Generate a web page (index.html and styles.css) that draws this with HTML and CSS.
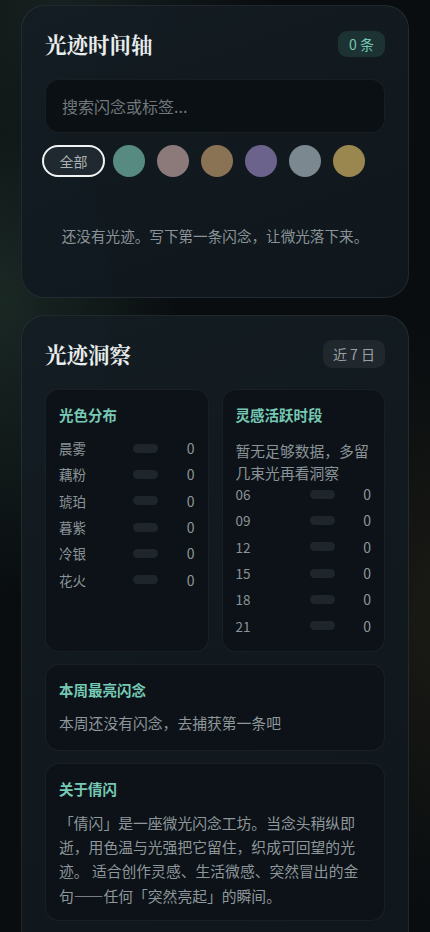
FILE: index.html
```html
<!DOCTYPE html>
<html lang="zh-CN">
<head>
<meta charset="utf-8">
<meta name="viewport" content="width=device-width, initial-scale=1">
<title>光迹</title>
<link rel="stylesheet" href="styles.css">
</head>
<body>
<main class="page">
  <section class="card">
    <header class="card-head">
      <h2 class="card-title">光迹时间轴</h2>
      <span class="badge badge-teal">0 条</span>
    </header>
    <div class="search">搜索闪念或标签...</div>
    <div class="filters">
      <button class="pill">全部</button>
      <span class="dot dot-mist"></span>
      <span class="dot dot-rose"></span>
      <span class="dot dot-amber"></span>
      <span class="dot dot-dusk"></span>
      <span class="dot dot-silver"></span>
      <span class="dot dot-spark"></span>
    </div>
    <p class="empty">还没有光迹。写下第一条闪念，让微光落下来。</p>
  </section>

  <section class="card card-insight">
    <header class="card-head">
      <h2 class="card-title">光迹洞察</h2>
      <span class="badge badge-grey">近 7 日</span>
    </header>
    <div class="grid2">
      <div class="sub">
        <h3 class="sub-title">光色分布</h3>
        <ul class="rows">
          <li class="row"><span class="lbl">晨雾</span><span class="bar"></span><span class="num">0</span></li>
          <li class="row"><span class="lbl">藕粉</span><span class="bar"></span><span class="num">0</span></li>
          <li class="row"><span class="lbl">琥珀</span><span class="bar"></span><span class="num">0</span></li>
          <li class="row"><span class="lbl">暮紫</span><span class="bar"></span><span class="num">0</span></li>
          <li class="row"><span class="lbl">冷银</span><span class="bar"></span><span class="num">0</span></li>
          <li class="row"><span class="lbl">花火</span><span class="bar"></span><span class="num">0</span></li>
        </ul>
      </div>
      <div class="sub">
        <h3 class="sub-title">灵感活跃时段</h3>
        <p class="sub-note">暂无足够数据，多留几束光再看洞察</p>
        <ul class="rows rows-tight">
          <li class="row"><span class="lbl">06</span><span class="bar"></span><span class="num">0</span></li>
          <li class="row"><span class="lbl">09</span><span class="bar"></span><span class="num">0</span></li>
          <li class="row"><span class="lbl">12</span><span class="bar"></span><span class="num">0</span></li>
          <li class="row"><span class="lbl">15</span><span class="bar"></span><span class="num">0</span></li>
          <li class="row"><span class="lbl">18</span><span class="bar"></span><span class="num">0</span></li>
          <li class="row"><span class="lbl">21</span><span class="bar"></span><span class="num">0</span></li>
        </ul>
      </div>
    </div>
    <div class="sub sub-wide sub-best">
      <h3 class="sub-title">本周最亮闪念</h3>
      <p class="sub-text">本周还没有闪念，去捕获第一条吧</p>
    </div>
    <div class="sub sub-wide">
      <h3 class="sub-title">关于倩闪</h3>
      <p class="sub-text about">「倩闪」是一座微光闪念工坊。当念头稍纵即逝，用色温与光强把它留住，织成可回望的光迹。 适合创作灵感、生活微感、突然冒出的金句——任何「突然亮起」的瞬间。</p>
    </div>
  </section>
</main>
</body>
</html>
```

FILE: styles.css
```css
* { box-sizing: border-box; }
html, body { margin: 0; padding: 0; }
body {
  width: 430px;
  min-height: 932px;
  overflow: hidden;
  font-family: "Noto Sans CJK SC", "Noto Sans", sans-serif;
  color: #c9d0d3;
  background:
    radial-gradient(ellipse 260px 420px at 0px 300px, rgba(40, 62, 52, 0.55), transparent 70%),
    radial-gradient(ellipse 240px 420px at 440px 620px, rgba(48, 42, 26, 0.45), transparent 70%),
    radial-gradient(ellipse 300px 200px at 60px 0px, rgba(38, 52, 48, 0.5), transparent 70%),
    #090d10;
}
.page {
  padding: 5px 21px 0;
  display: flex;
  flex-direction: column;
  gap: 17px;
}
.card {
  background: linear-gradient(160deg, rgba(20, 29, 35, 0.96), rgba(16, 24, 30, 0.96));
  border: 1px solid rgba(255, 255, 255, 0.07);
  border-radius: 24px;
  padding: 23px 23px 23px;
}
.card-head {
  display: flex;
  justify-content: space-between;
  align-items: center;
  height: 30px;
}
.card-title {
  margin: 0;
  font-family: "Noto Serif CJK SC", "Noto Sans CJK SC", serif;
  font-weight: 700;
  font-size: 21.5px;
  line-height: 30px;
  color: #e8ecec;
}
.badge {
  font-size: 14px;
  line-height: 20px;
  border-radius: 9px;
  padding: 4px 10px;
}
.badge-teal {
  background: #1d3232;
  color: #74c9b6;
  padding: 3px 11px;
}
.badge-grey {
  background: #20272d;
  color: #98a1a6;
}
.search {
  margin-top: 20px;
  height: 54px;
  border-radius: 14px;
  background: #0b1014;
  border: 1px solid rgba(255, 255, 255, 0.06);
  padding: 0 16px;
  display: flex;
  align-items: center;
  font-size: 16px;
  color: #70787c;
}
.filters {
  margin-top: 12px;
  display: flex;
  align-items: center;
  gap: 12px;
}
.pill {
  margin-left: -3px;
  margin-right: -4px;
  width: 63px;
  height: 32px;
  border-radius: 16px;
  border: 2px solid #f2f4f4;
  background: #1f292f;
  color: #aab2b5;
  font-family: inherit;
  font-size: 14px;
  padding: 0;
}
.dot {
  width: 32px;
  height: 32px;
  border-radius: 50%;
  flex: none;
}
.dot-mist { background: #578a80; }
.dot-rose { background: #8c7a7a; }
.dot-amber { background: #8a7255; }
.dot-dusk { background: #6c638c; }
.dot-silver { background: #7c888f; }
.dot-spark { background: #9a864f; }
.empty {
  margin: 0;
  padding: 48px 0 27px;
  text-align: center;
  font-size: 14.6px;
  line-height: 22px;
  color: #8a9498;
}
.card-insight { padding-bottom: 40px; }
.grid2 {
  margin-top: 20px;
  display: grid;
  grid-template-columns: 1fr 1fr;
  gap: 13px;
}
.sub {
  background: #0c1217;
  border: 1px solid rgba(255, 255, 255, 0.06);
  border-radius: 14px;
  padding: 13px 13px 12px;
}
.sub-wide { margin-top: 12px; }
.sub-best { padding-bottom: 15px; }
.sub-title {
  margin: 0;
  font-size: 14.5px;
  line-height: 24px;
  font-weight: 700;
  color: #76c9b5;
}
.rows {
  list-style: none;
  margin: 8px 0 0;
  padding: 0;
  display: flex;
  flex-direction: column;
}
.rows-tight { margin-top: -3px; }
.row {
  display: grid;
  grid-template-columns: 74px 25px 1fr;
  align-items: center;
  height: 26.3px;
  font-size: 13.5px;
  color: #8a9397;
}
.bar {
  height: 9px;
  border-radius: 5px;
  background: #1e252b;
}
.num {
  text-align: right;
  font-size: 14px;
  color: #8d979b;
}
.sub-note {
  margin: 13px 0 0;
  font-size: 14.8px;
  line-height: 22px;
  color: #8a9397;
}
.sub-text {
  margin: 9px 0 0;
  font-size: 14.8px;
  line-height: 24px;
  color: #8e979b;
}
.about {
  margin-top: 10px;
  line-height: 24.3px;
}
```
